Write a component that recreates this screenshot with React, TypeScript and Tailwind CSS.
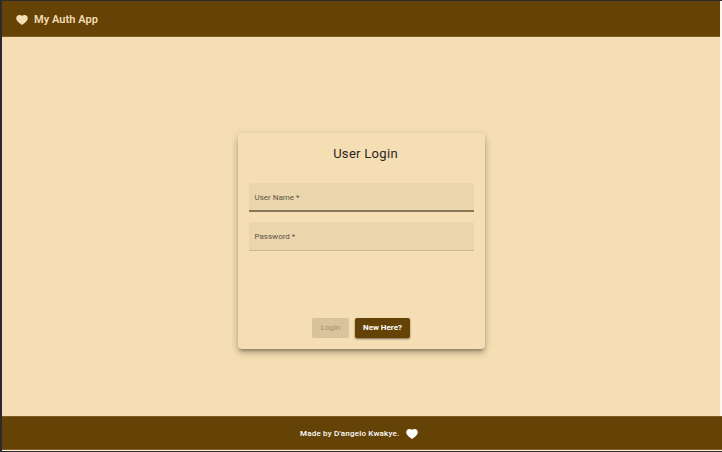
import React from "react";

function Heart({ className }: { className: string }) {
  return (
    <svg viewBox="0 0 12 10" fill="currentColor" className={className} aria-hidden="true">
      <path d="M6 .7C5.3.2 4.4 0 3.4 0 1.4 0 .2 1.4.2 3.2c0 2.2 1.8 3.7 4.8 6.1l1 .7 1-.7c3-2.4 4.8-3.9 4.8-6.1C11.8 1.4 10.6 0 8.6 0 7.6 0 6.7.2 6 .7z" />
    </svg>
  );
}

function Field({ label, active }: { label: string; active?: boolean }) {
  return (
    <div
      className={
        active
          ? "flex h-[29px] items-center rounded-t-[2px] border-b-2 border-[#857658] bg-[#ebd5ac] pl-[6px]"
          : "flex h-[29px] items-center rounded-t-[2px] border-b border-[#cbb68f] bg-[#ebd5ac] pl-[6px]"
      }
    >
      <span className="pt-[2px] text-[8px] leading-none text-[#5d5444]">{label}</span>
    </div>
  );
}

export default function App() {
  return (
    <div className="flex h-[452px] w-[722px] flex-col overflow-hidden border-t border-b border-l-2 border-[#2b2b2f] bg-[#f5deb3] font-[Roboto,sans-serif]">
      <div className="flex h-[415px] shrink-0 flex-col border-r-2 border-[#fdf8ef]">
        <header className="flex h-9 shrink-0 items-center border-b border-[#7d5b25] bg-[#654306] pl-[14px] text-[#f5deb3]">
          <Heart className="mt-[2px] h-[10px] w-[12px]" />
          <h1 className="mt-[2px] ml-[6px] text-[11px] leading-none font-semibold tracking-[0.05px]">My Auth App</h1>
        </header>
        <main className="flex flex-1 items-start justify-center pt-[96px]">
          <section className="flex h-[216px] w-[247px] flex-col rounded-[4px] bg-[#f5deb3] px-[11px] shadow-[0_3px_3px_-1px_rgba(0,0,0,0.24),0_5px_7px_rgba(0,0,0,0.16),0_1px_9px_rgba(0,0,0,0.12)]">
            <h2 className="mt-[13px] pl-[9px] text-center text-[13px] leading-[15px] tracking-[0.3px] text-[#29251e]">User Login</h2>
            <form className="mt-[22px] flex flex-1 flex-col gap-[10px]">
              <Field label="User Name *" active />
              <Field label="Password *" />
              <div className="mt-auto mb-[11px] flex justify-center gap-[6px]">
                <button type="button" disabled className="h-5 w-[37px] rounded-[2px] bg-[#d8c39d] text-[8px] leading-none text-[#9f8f73]">
                  Login
                </button>
                <button type="button" className="h-5 w-[55px] rounded-[2px] bg-[#654306] text-[8px] leading-none font-bold text-white shadow-[0_1px_2px_rgba(0,0,0,0.5)]">
                  New Here?
                </button>
              </div>
            </form>
          </section>
        </main>
      </div>
      <footer className="flex h-[34px] shrink-0 items-center border-t border-b border-[#7d5b25] bg-[#654306] pl-[298px] text-white">
        <span className="pt-[2px] text-[8px] leading-none font-medium tracking-[0.2px]">Made by D'angelo Kwakye.</span>
        <Heart className="mt-[2px] ml-[7px] h-[10px] w-[12px]" />
      </footer>
      <div className="h-px shrink-0 bg-[#fdf3df]" />
    </div>
  );
}
